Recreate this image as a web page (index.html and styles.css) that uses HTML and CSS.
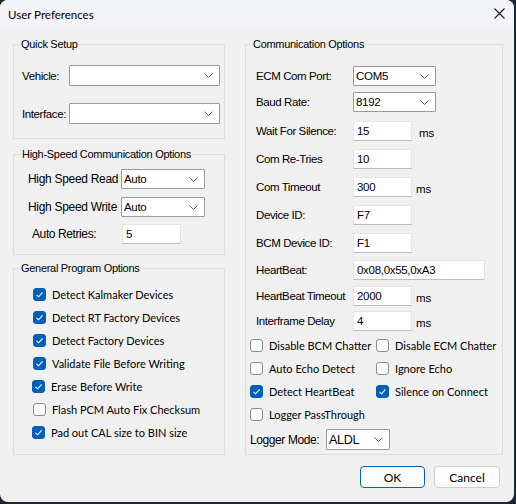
FILE: index.html
```html
<!DOCTYPE html>
<html>
<head>
<meta charset="utf-8">
<link rel="stylesheet" href="styles.css">
</head>
<body>
<div class="window">
  <div class="titlebar">
    <span class="title">User Preferences</span>
    <svg class="close" width="11" height="11" viewBox="0 0 11 11"><path d="M0.5 0.5 L10.5 10.5 M10.5 0.5 L0.5 10.5" stroke="#1b1b1b" stroke-width="1.1" fill="none"/></svg>
  </div>
  <div class="content">
    <div class="columns">
      <div class="left">
        <div class="group qs">
          <div class="legend">Quick Setup</div>
          <div class="qs-rows">
            <div class="row"><span class="lbl lbl-qs">Vehicle:</span><div class="combo w150"><span class="val"></span><svg class="chev" width="9" height="5" viewBox="0 0 9 5"><path d="M0.5 0.5 L4.5 4.5 L8.5 0.5" stroke="#606060" fill="none"/></svg></div></div>
            <div class="row"><span class="lbl lbl-qs">Interface:</span><div class="combo w150"><span class="val"></span><svg class="chev" width="9" height="5" viewBox="0 0 9 5"><path d="M0.5 0.5 L4.5 4.5 L8.5 0.5" stroke="#606060" fill="none"/></svg></div></div>
          </div>
        </div>
        <div class="group hs">
          <div class="legend">High-Speed Communication Options</div>
          <div class="hs-rows">
            <div class="row hs-row"><span class="lbl lbl-hs">High Speed Read</span><div class="combo w84"><span class="val">Auto</span><svg class="chev" width="9" height="5" viewBox="0 0 9 5"><path d="M0.5 0.5 L4.5 4.5 L8.5 0.5" stroke="#606060" fill="none"/></svg></div></div>
            <div class="row hs-row"><span class="lbl lbl-hs">High Speed Write</span><div class="combo w84"><span class="val">Auto</span><svg class="chev" width="9" height="5" viewBox="0 0 9 5"><path d="M0.5 0.5 L4.5 4.5 L8.5 0.5" stroke="#606060" fill="none"/></svg></div></div>
            <div class="row hs-row retries"><span class="lbl lbl-retries">Auto Retries:</span><div class="tbox w59">5</div></div>
          </div>
        </div>
        <div class="group gpo">
          <div class="legend">General Program Options</div>
          <div class="checks">
            <div class="chk"><span class="box on"><svg width="13" height="13" viewBox="0 0 13 13"><path d="M3.5 6.8 L5.6 8.8 L9.6 4.4" stroke="#fff" stroke-width="1.1" fill="none"/></svg></span><span class="ctext">Detect Kalmaker Devices</span></div>
            <div class="chk"><span class="box on"><svg width="13" height="13" viewBox="0 0 13 13"><path d="M3.5 6.8 L5.6 8.8 L9.6 4.4" stroke="#fff" stroke-width="1.1" fill="none"/></svg></span><span class="ctext">Detect RT Factory Devices</span></div>
            <div class="chk"><span class="box on"><svg width="13" height="13" viewBox="0 0 13 13"><path d="M3.5 6.8 L5.6 8.8 L9.6 4.4" stroke="#fff" stroke-width="1.1" fill="none"/></svg></span><span class="ctext">Detect Factory Devices</span></div>
            <div class="chk"><span class="box on"><svg width="13" height="13" viewBox="0 0 13 13"><path d="M3.5 6.8 L5.6 8.8 L9.6 4.4" stroke="#fff" stroke-width="1.1" fill="none"/></svg></span><span class="ctext">Validate File Before Writing</span></div>
            <div class="chk shift"><span class="box on"><svg width="13" height="13" viewBox="0 0 13 13"><path d="M3.5 6.8 L5.6 8.8 L9.6 4.4" stroke="#fff" stroke-width="1.1" fill="none"/></svg></span><span class="ctext">Erase Before Write</span></div>
            <div class="chk"><span class="box"></span><span class="ctext">Flash PCM Auto Fix Checksum</span></div>
            <div class="chk shift"><span class="box on"><svg width="13" height="13" viewBox="0 0 13 13"><path d="M3.5 6.8 L5.6 8.8 L9.6 4.4" stroke="#fff" stroke-width="1.1" fill="none"/></svg></span><span class="ctext">Pad out CAL size to BIN size</span></div>
          </div>
        </div>
      </div>
      <div class="group comm">
        <div class="legend">Communication Options</div>
        <div class="fields">
          <div class="row frow"><span class="lbl lbl-c">ECM Com Port:</span><div class="combo w83"><span class="val">COM5</span><svg class="chev" width="9" height="5" viewBox="0 0 9 5"><path d="M0.5 0.5 L4.5 4.5 L8.5 0.5" stroke="#606060" fill="none"/></svg></div></div>
          <div class="row frow"><span class="lbl lbl-c">Baud Rate:</span><div class="combo w83"><span class="val">8192</span><svg class="chev" width="9" height="5" viewBox="0 0 9 5"><path d="M0.5 0.5 L4.5 4.5 L8.5 0.5" stroke="#606060" fill="none"/></svg></div></div>
          <div class="row frow"><span class="lbl lbl-c">Wait For Silence:</span><div class="tbox w59">15</div><span class="unit wide">ms</span></div>
          <div class="row frow"><span class="lbl lbl-c">Com Re-Tries</span><div class="tbox w59">10</div></div>
          <div class="row frow"><span class="lbl lbl-c">Com Timeout</span><div class="tbox w59">300</div><span class="unit">ms</span></div>
          <div class="row frow"><span class="lbl lbl-c">Device ID:</span><div class="tbox w59">F7</div></div>
          <div class="row frow"><span class="lbl lbl-c">BCM Device ID:</span><div class="tbox w59">F1</div></div>
          <div class="row frow"><span class="lbl lbl-c">HeartBeat:</span><div class="tbox w132">0x08,0x55,0xA3</div></div>
          <div class="row frow"><span class="lbl lbl-c">HeartBeat Timeout</span><div class="tbox w59">2000</div><span class="unit">ms</span></div>
          <div class="row frow"><span class="lbl lbl-c">Interframe Delay</span><div class="tbox w59">4</div><span class="unit">ms</span></div>
        </div>
        <div class="cgrid">
          <div class="chk"><span class="box"></span><span class="ctext">Disable BCM Chatter</span></div>
          <div class="chk"><span class="box"></span><span class="ctext">Disable ECM Chatter</span></div>
          <div class="chk"><span class="box"></span><span class="ctext">Auto Echo Detect</span></div>
          <div class="chk"><span class="box"></span><span class="ctext">Ignore Echo</span></div>
          <div class="chk"><span class="box on"><svg width="13" height="13" viewBox="0 0 13 13"><path d="M3.5 6.8 L5.6 8.8 L9.6 4.4" stroke="#fff" stroke-width="1.1" fill="none"/></svg></span><span class="ctext">Detect HeartBeat</span></div>
          <div class="chk"><span class="box on"><svg width="13" height="13" viewBox="0 0 13 13"><path d="M3.5 6.8 L5.6 8.8 L9.6 4.4" stroke="#fff" stroke-width="1.1" fill="none"/></svg></span><span class="ctext">Silence on Connect</span></div>
          <div class="chk"><span class="box"></span><span class="ctext">Logger PassThrough</span></div>
        </div>
        <div class="row logger"><span class="lbl lbl-log">Logger Mode:</span><div class="combo w64 big"><span class="val">ALDL</span><svg class="chev" width="9" height="5" viewBox="0 0 9 5"><path d="M0.5 0.5 L4.5 4.5 L8.5 0.5" stroke="#606060" fill="none"/></svg></div></div>
      </div>
    </div>
    <div class="buttons">
      <div class="btn default">OK</div>
      <div class="btn">Cancel</div>
    </div>
  </div>
</div>
</body>
</html>
```

FILE: styles.css
```css
html, body {
  margin: 0;
  padding: 0;
}
body {
  background: #1d2630;
  width: 516px;
  height: 504px;
  overflow: hidden;
}
.window {
  width: 514px;
  height: 502px;
  background: #f0f0f0;
  border-radius: 8px;
  overflow: hidden;
  display: flex;
  flex-direction: column;
}
.titlebar {
  height: 28px;
  flex: none;
  background: #f3f4f7;
  display: flex;
  align-items: center;
  justify-content: space-between;
  padding: 0 9px 0 8px;
}
.title {
  font-family: Lato, "Liberation Sans", sans-serif;
  font-size: 11.5px;
  color: #000;
}
.close {
  display: block;
  margin-top: -1px;
}
.content {
  padding: 16px 11px 0 13px;
  display: flex;
  flex-direction: column;
}
.columns {
  display: flex;
  gap: 20px;
  align-items: flex-start;
}
.left {
  width: 212px;
  display: flex;
  flex-direction: column;
}
.group {
  box-sizing: border-box;
  border: 1px solid #dcdcdc;
}
.qs { height: 95px; }
.hs { height: 101px; margin-top: 15px; }
.gpo { height: 187px; margin-top: 13px; }
.comm { width: 258px; height: 411px; }

.legend {
  display: table;
  margin: -8px 0 0 6px;
  padding: 0 1px;
  height: 14px;
  line-height: 14px;
  background: #f0f0f0;
  font-family: "Liberation Sans", Arial, sans-serif;
  font-size: 11px;
  letter-spacing: -0.3px;
  color: #000;
}
.hs .legend { margin-left: 7px; }

.row {
  display: flex;
  align-items: center;
}
.lbl {
  font-family: "Liberation Sans", Arial, sans-serif;
  font-size: 11.5px;
  letter-spacing: -0.4px;
  color: #000;
  white-space: nowrap;
  flex: none;
}
.combo, .tbox {
  box-sizing: border-box;
  background: #fff;
  font-family: "Liberation Sans", Arial, sans-serif;
  font-size: 11.5px;
  letter-spacing: -0.3px;
  color: #000;
  flex: none;
}
.combo {
  height: 20px;
  border: 1px solid #9a9a9a;
  border-radius: 1px;
  display: flex;
  align-items: center;
  justify-content: space-between;
  padding: 0 6px 0 2px;
}
.combo.big { height: 21px; font-size: 12.5px; }
.chev { display: block; }
.tbox {
  height: 20px;
  border: 1px solid #e4e4e4;
  border-bottom-color: #bdbdbd;
  padding: 0 0 0 3px;
  line-height: 18px;
}

/* Quick setup */
.qs-rows {
  margin-top: 14px;
  padding-left: 8px;
  display: flex;
  flex-direction: column;
  gap: 17px;
}
.qs-rows .combo { height: 21px; }
.lbl-qs { width: 47px; }
.w150 { width: 151px; }
.w84 { width: 84px; }
.w83 { width: 83px; }
.w59 { width: 59px; }
.w64 { width: 64px; }
.w132 { width: 132px; }

/* High speed */
.hs-rows {
  margin-top: 8px;
  padding-left: 14px;
  display: flex;
  flex-direction: column;
  gap: 8px;
}
.hs-rows .retries { margin-top: -1px; }
.lbl-hs { width: 93px; font-size: 12px; letter-spacing: -0.3px; }
.retries { padding-left: 4px; }
.lbl-retries { width: 90px; font-size: 12px; letter-spacing: -0.4px; }

/* Checkboxes */
.checks {
  margin-top: 8px;
  padding-left: 19px;
  display: flex;
  flex-direction: column;
}
.chk {
  height: 23px;
  display: flex;
  align-items: center;
  gap: 6px;
}
.checks .chk.shift { margin-left: -1px; }
.box {
  box-sizing: border-box;
  width: 13px;
  height: 13px;
  border-radius: 3px;
  border: 1px solid #8b8b8b;
  background: #fafafa;
  flex: none;
}
.box.on {
  background: #005fb8;
  border-color: #005fb8;
}
.box svg { display: block; margin: -1px; }
.ctext {
  font-family: Lato, "Liberation Sans", sans-serif;
  font-size: 11px;
  color: #000;
  white-space: nowrap;
}

/* Communication */
.fields {
  margin-top: 15px;
  padding-left: 10px;
  display: grid;
  grid-template-rows: 26px 29px 28px 28px 28px 28px 27px 26px 25px 20px;
}
.frow { height: 20px; align-self: start; }
.lbl-c { width: 97px; }
.unit {
  font-family: "Liberation Sans", Arial, sans-serif;
  font-size: 11.5px;
  color: #000;
  margin-left: 4px;
  margin-top: 3px;
}
.unit.wide { margin-left: 7px; }
.cgrid {
  margin-top: 3px;
  padding-left: 4px;
  display: grid;
  grid-template-columns: 126px 1fr;
}
.logger {
  margin-top: 3px;
  padding-left: 4px;
}
.lbl-log { width: 76px; font-size: 12px; }

/* Buttons */
.buttons {
  margin-top: 11px;
  margin-right: 3px;
  display: flex;
  justify-content: flex-end;
  gap: 9px;
}
.btn {
  box-sizing: border-box;
  width: 65px;
  height: 22px;
  border: 1px solid #d0d0d0;
  border-radius: 4px;
  background: #fdfdfd;
  font-family: Lato, "Liberation Sans", sans-serif;
  font-size: 12px;
  color: #000;
  display: flex;
  align-items: center;
  justify-content: center;
}
.btn.default { border-color: #005fb8; }
.btn + .btn { width: 66px; }
```
